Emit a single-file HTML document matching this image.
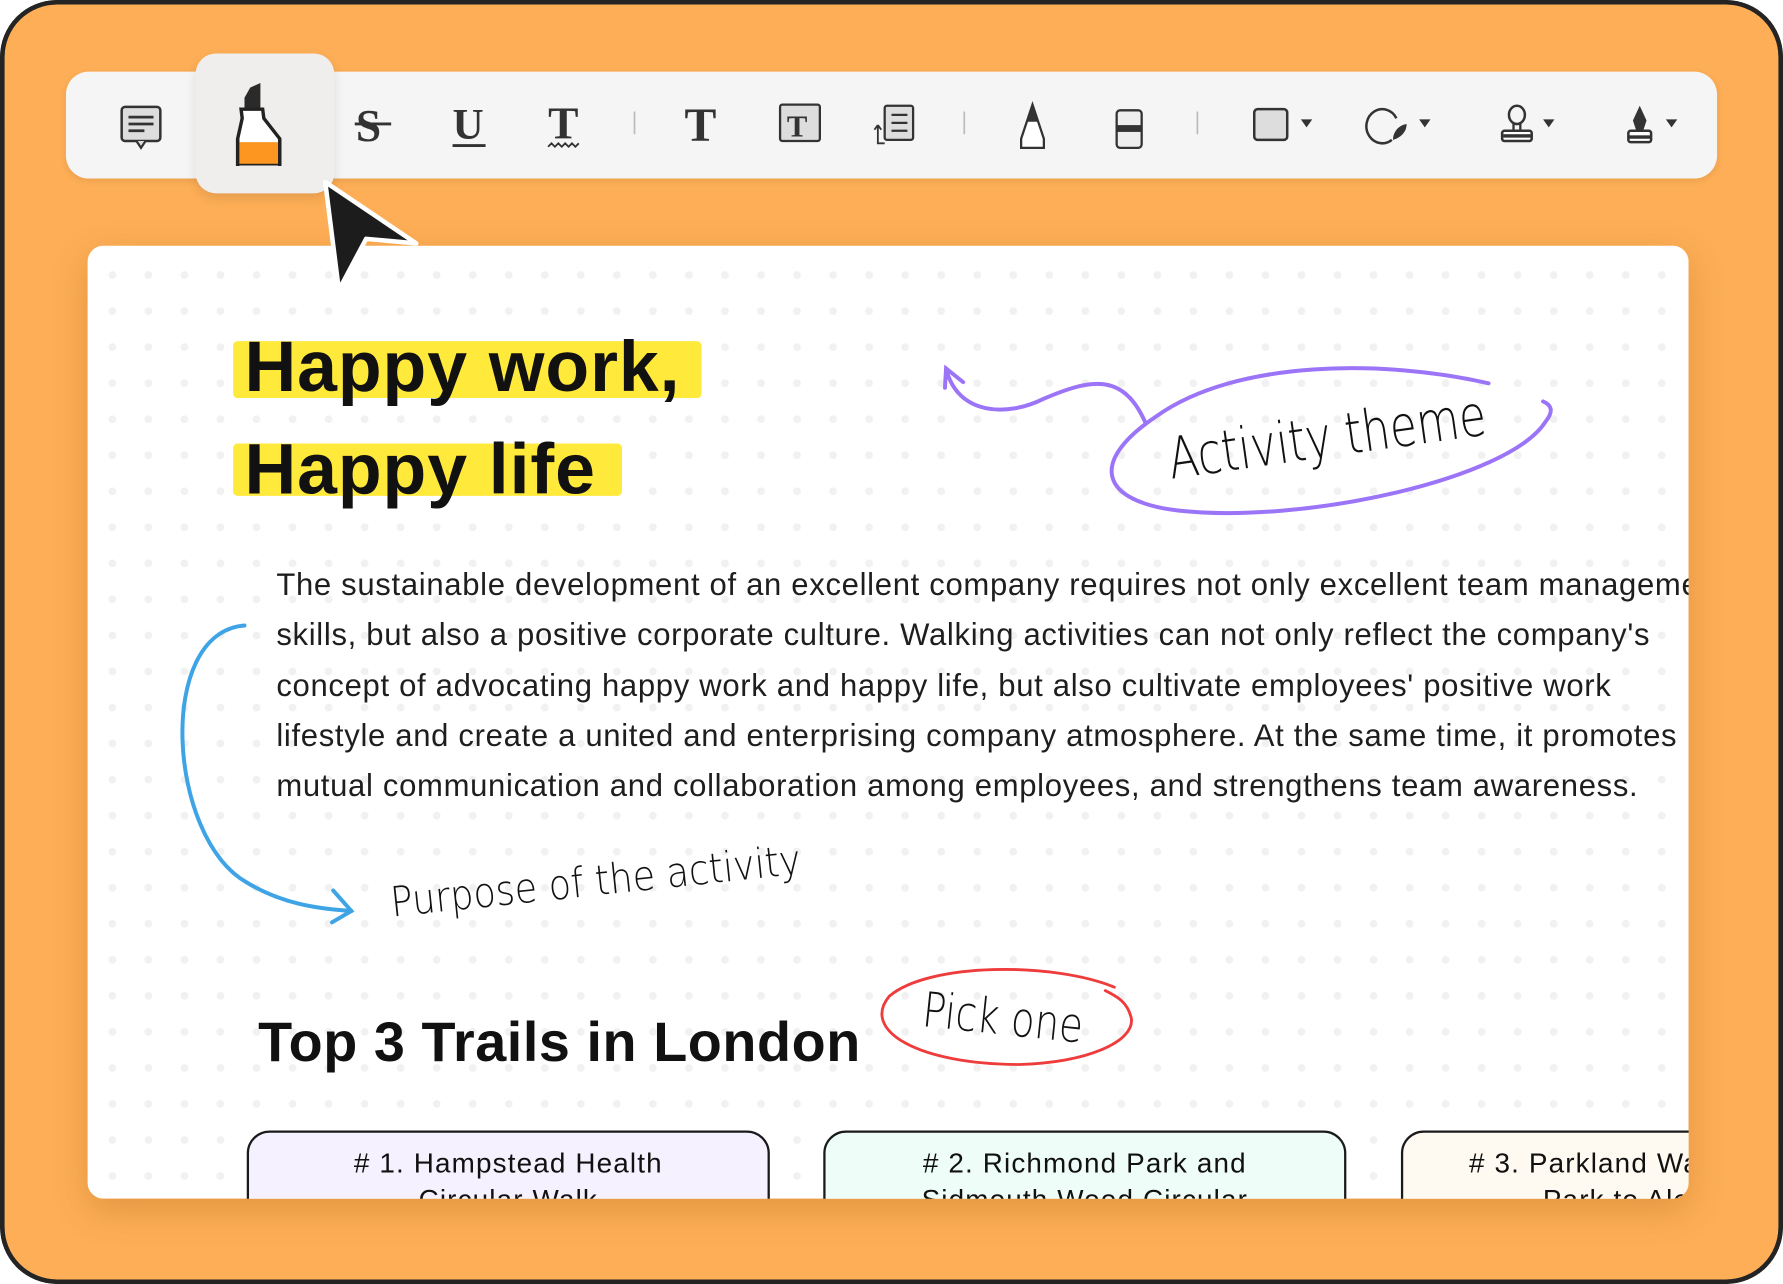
<!DOCTYPE html>
<html><head><meta charset="utf-8"><style>
html,body{margin:0;padding:0;width:1783px;height:1284px;overflow:hidden;background:#fff}
#s{position:absolute;left:0;top:0;width:1568px;height:1129px;transform:scale(1.13712,1.13729);transform-origin:0 0;font-family:"Liberation Sans",sans-serif;overflow:hidden;border-radius:50px}
.frame{position:absolute;left:0;top:0;width:1568px;height:1129px;box-sizing:border-box;border:4px solid #242424;border-radius:50px;background:#fdae56}
.tb{position:absolute;left:58px;top:63px;width:1452px;height:94px;background:#f5f5f5;border-radius:20px;box-shadow:0 2px 6px rgba(0,0,0,.08)}
.sel{position:absolute;left:172px;top:47px;width:122px;height:123px;background:#efeeec;border-radius:18px;box-shadow:0 4px 10px rgba(0,0,0,.1)}
.card{position:absolute;left:77px;top:216px;width:1408px;height:838px;background-color:#fff;border-radius:14px;overflow:hidden;
background-image:radial-gradient(circle,#f1f1f1 3.2px,transparent 3.6px);background-size:31.7px 31.7px;background-position:6px 10px;box-shadow:0 10px 30px rgba(150,80,0,.25)}
.hl{position:absolute;background:#ffe93b;border-radius:4px}
.h1{position:absolute;font-weight:bold;font-size:63px;color:#111;letter-spacing:0.8px;white-space:nowrap}
.p{position:absolute;left:166px;top:276px;width:1400px;font-size:27.3px;line-height:44.3px;color:#1e1e1e;white-space:nowrap;letter-spacing:0.6px}
.h2{position:absolute;left:150px;top:673px;font-size:49px;font-weight:bold;color:#111;white-space:nowrap;letter-spacing:0.5px}
.tc{position:absolute;top:778px;width:460px;height:120px;border:2px solid #1a1a1a;border-radius:20px;text-align:center;font-size:24.5px;line-height:32px;padding-top:12px;box-sizing:border-box;color:#111;letter-spacing:1px}
.hw{font-family:"DejaVu Sans",sans-serif}
</style></head><body><div id="s">
<div class="frame"></div>
<div class="card">
 <div class="hl" style="left:128px;top:84px;width:412px;height:50px"></div>
 <div class="hl" style="left:128px;top:174px;width:342px;height:46px"></div>
 <div class="h1" style="left:138px;top:71px">Happy work,</div>
 <div class="h1" style="left:138px;top:161px">Happy life</div>
 <div class="p">The sustainable development of an excellent company requires not only excellent team management<br>skills, but also a positive corporate culture. Walking activities can not only reflect the company's<br>concept of advocating happy work and happy life, but also cultivate employees' positive work<br>lifestyle and create a united and enterprising company atmosphere. At the same time, it promotes<br>mutual communication and collaboration among employees, and strengthens team awareness.</div>
 <div class="h2">Top 3 Trails in London</div>
 <div class="tc" style="left:140px;background:#f5f1ff"># 1. Hampstead Health<br>Circular Walk</div>
 <div class="tc" style="left:647px;background:#effdf8"># 2. Richmond Park and<br>Sidmouth Wood Circular</div>
 <div class="tc" style="left:1155px;background:#fffaf1"># 3. Parkland Walk: Finsbury<br>Park to Alexandra</div>
 <svg style="position:absolute;left:0;top:0" width="1408" height="838" viewBox="0 0 1408 838">
  <g fill="none" stroke-linecap="round" stroke-width="3.5">
   <path d="M755 108 C765 150 810 150 840 135 C880 118 910 110 930 155" stroke="#9b74f7"/>
   <path d="M754 125 L755 108 L770 120" stroke="#9b74f7"/>
   <path d="M1232 121 C1140 100 1010 100 940 150 C880 190 890 225 960 233 C1070 245 1250 205 1282 155 C1290 145 1287 140 1280 137" stroke="#9b74f7"/>
   <path d="M138 334 C60 340 70 520 140 560 C170 578 200 583 232 585" stroke="#3fa4e6"/>
   <path d="M216 567 L232 585 L215 595" stroke="#3fa4e6"/>
   <path d="M903 652 C850 630 740 630 705 660 C680 690 730 720 820 720 C880 718 920 700 918 680 C915 665 905 660 895 655" stroke="#ee3b3b" stroke-width="2.5"/>
  </g>
  <g transform="translate(953 205) rotate(-8) scale(0.92 1.2)"><text x="0" y="0" class="hw" font-size="42" fill="#111" font-weight="200">Activity theme</text></g>
  <g transform="translate(268 590) rotate(-6) scale(1.15 1.3)"><text x="0" y="0" class="hw" font-size="28" fill="#111" font-weight="200">Purpose of the activity</text></g>
  <g transform="translate(733 686) rotate(6) scale(1.0 1.25)"><text x="0" y="0" class="hw" font-size="34" fill="#111" font-weight="200">Pick one</text></g>
 </svg>
</div>
<div class="tb"></div>
<div class="sel"></div>
<svg style="position:absolute;left:0;top:0" width="1568" height="300" viewBox="0 0 1568 300">
 <g fill="#333" stroke="#333">
  <rect x="107" y="94" width="34" height="30" rx="3" fill="#ddd" stroke-width="2.2"/>
  <path d="M120 124 L124 130 L128 124" fill="#ddd" stroke-width="2"/>
  <path d="M113 103h22M113 109h22M113 115h14" stroke-width="2.4"/>
  <path d="M220 77 L229 73 L229 96 L215 96 L215 86 Z" fill="#2a2a2a" stroke="none"/>
  <path d="M212 96 L231 96 L232 104 L246 122 L246 144 L209 144 L209 122 L213 104 Z" fill="#fff" stroke="#222" stroke-width="3"/>
  <rect x="209" y="125" width="37" height="19" fill="#fd9621" stroke="none"/>
  <path d="M209 122 L209 146 M246 122 L246 146" stroke="#222" stroke-width="3"/>
  <text x="313" y="124" font-family="Liberation Serif" font-weight="bold" font-size="40" stroke="none">S</text>
  <path d="M312 109h32" stroke-width="2.5"/>
  <text x="398" y="122" font-family="Liberation Serif" font-weight="bold" font-size="38" stroke="none">U</text>
  <path d="M398 128h29" stroke-width="2.5"/>
  <text x="482" y="122" font-family="Liberation Serif" font-weight="bold" font-size="40" stroke="none">T</text>
  <path d="M482 129 l3 -3 l3 3 l3 -3 l3 3 l3 -3 l3 3 l3 -3 l3 3 l3 -3" fill="none" stroke-width="1.6"/>
  <path d="M558 98v20M848 98v20M1053 98v20" stroke="#bbb" stroke-width="1.5"/>
  <text x="602" y="124" font-family="Liberation Serif" font-weight="bold" font-size="42" stroke="none">T</text>
  <rect x="686" y="92" width="35" height="32" rx="2" fill="#ddd" stroke-width="2"/>
  <text x="692" y="120" font-family="Liberation Serif" font-weight="bold" font-size="27" stroke="none">T</text>
  <path d="M772 110 v16 h6 M772 110 l-3 4 M772 110 l3 4" fill="none" stroke-width="1.6"/>
  <rect x="778" y="93" width="25" height="30" rx="2" fill="#ddd" stroke-width="2"/>
  <path d="M784 101h14M784 108h14M784 115h14" stroke-width="2"/>
  <path d="M908 92 L898 122 L898 130 L918 130 L918 122 Z" fill="#fff" stroke-width="2"/>
  <path d="M908 92 L903 107 L913 107 Z" stroke="none"/>
  <rect x="982" y="97" width="22" height="33" rx="3" fill="#eee" stroke-width="2"/>
  <rect x="982" y="110" width="22" height="6" stroke="none"/>
  <rect x="1103" y="96" width="29" height="27" rx="3" fill="#ddd" stroke-width="2.2"/>
  <path d="M1144 105h10l-5 7z M1248 105h10l-5 7z M1357 105h10l-5 7z M1465 105h10l-5 7z" stroke="none"/>
  <path d="M1228 104 A14 15 0 1 0 1224 123" fill="none" stroke-width="2.2"/>
  <path d="M1237 109 C1230 110 1225 116 1225 123 C1232 121 1237 116 1237 109Z" stroke="none"/>
  <ellipse cx="1334" cy="101" rx="7" ry="8" fill="none" stroke-width="2.2"/>
  <path d="M1331 109h6v6h-6z" fill="none" stroke-width="2"/>
  <rect x="1321" y="115" width="26" height="9" rx="2" fill="#fff" stroke-width="2.2"/>
  <rect x="1322" y="118" width="25" height="3" stroke="none"/>
  <path d="M1442 93 L1436 106 L1439 115 L1445 115 L1448 106 Z" stroke="none"/>
  <rect x="1432" y="115" width="20" height="10" rx="2" fill="#fff" stroke-width="2.2"/>
  <rect x="1432" y="119" width="20" height="3" stroke="none"/>
 </g>
 <path d="M286 160 L298 255 L322 210 L366 214 Z" fill="#1c1c1c" stroke="#fff" stroke-width="4" stroke-linejoin="round"/>
</svg>
<div style="position:absolute;left:0;top:0;width:1568px;height:1129px;box-sizing:border-box;border:4px solid #242424;border-radius:50px;pointer-events:none"></div>
</div></body></html>
